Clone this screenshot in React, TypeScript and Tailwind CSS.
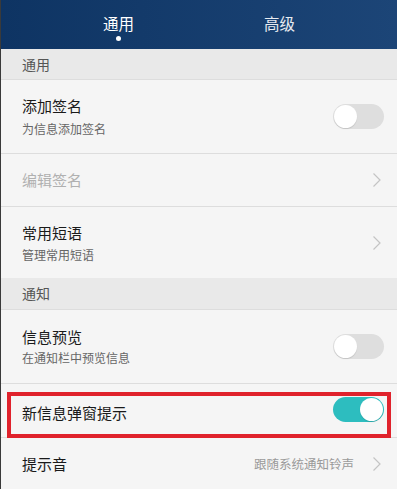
import React from 'react';

const font = { fontFamily: '"Noto Sans CJK SC", "Noto Sans", sans-serif' };

const Toggle: React.FC<{ on?: boolean }> = ({ on }) => (
  <div
    className={`w-[51px] h-[25px] rounded-full flex items-center px-[1px] ${
      on ? 'bg-[#2dbdbf] justify-end' : 'bg-[#dedede] justify-start'
    }`}
  >
    <div className="w-[23px] h-[23px] rounded-full bg-white shadow-[0_1px_1px_rgba(0,0,0,0.12)]" />
  </div>
);

const Chevron: React.FC = () => (
  <svg width="10" height="16" viewBox="0 0 10 16" className="shrink-0">
    <path d="M1.5 1.5 L8 8 L1.5 14.5" fill="none" stroke="#c4c4c4" strokeWidth="1.2" />
  </svg>
);

const Section: React.FC<{ title: string; h: string }> = ({ title, h }) => (
  <div className={`${h} bg-[#e9e9e9] flex items-center pl-[21px] border-b border-[#dddddd] text-[14px] text-[#555555]`}>
    {title}
  </div>
);

export default function App() {
  return (
    <div className="w-[397px] h-[489px] overflow-hidden bg-[#f5f5f5] border-l border-[#3a3a3a]" style={font}>
      {/* HEADER TABS */}
      <div className="h-[49px] bg-gradient-to-r from-[#0e3463] to-[#1c4577] flex justify-center">
        <div className="w-[161px] flex flex-col items-center pt-[12px]">
          <span className="text-[15.5px] leading-[22px] text-white">通用</span>
          <span className="mt-[2px] w-[5px] h-[5px] rounded-full bg-white" />
        </div>
        <div className="w-[161px] flex flex-col items-center pt-[12px]">
          <span className="text-[15.5px] leading-[22px] text-white/90">高级</span>
        </div>
      </div>

      <Section title="通用" h="h-[31px]" />

      <div className="h-[74px] border-b border-[#dddddd] flex items-center pl-[21px] pr-[13px]">
        <div className="flex-1 flex flex-col gap-[5px]">
          <span className="text-[15px] leading-[20px] text-[#1a1a1a]">添加签名</span>
          <span className="text-[12px] leading-[16px] text-[#666666]">为信息添加签名</span>
        </div>
        <Toggle />
      </div>

      <div className="h-[53px] border-b border-[#dddddd] flex items-center pl-[21px] pr-[15px]">
        <span className="flex-1 text-[15px] leading-[20px] text-[#b0b0b0]">编辑签名</span>
        <Chevron />
      </div>

      <div className="h-[71px] flex items-center pl-[21px] pr-[15px]">
        <div className="flex-1 flex flex-col gap-[4px]">
          <span className="text-[15px] leading-[20px] text-[#1a1a1a]">常用短语</span>
          <span className="text-[12px] leading-[16px] text-[#666666]">管理常用短语</span>
        </div>
        <Chevron />
      </div>

      <Section title="通知" h="h-[32px]" />

      <div className="h-[74px] border-b border-[#dddddd] flex items-center pl-[21px] pr-[13px]">
        <div className="flex-1 flex flex-col gap-[3px]">
          <span className="text-[15px] leading-[20px] text-[#1a1a1a]">信息预览</span>
          <span className="text-[12px] leading-[16px] text-[#666666]">在通知栏中预览信息</span>
        </div>
        <Toggle />
      </div>

      <div className="relative h-[54px] border-b border-[#dddddd] flex items-center pl-[21px] pr-[13px] pt-[4px]">
        <span className="flex-1 text-[15px] leading-[20px] text-[#1a1a1a]">新信息弹窗提示</span>
        <div className="-mt-[6px]">
          <Toggle on />
        </div>
        {/* red annotation box */}
        <div className="absolute left-[6px] right-[6px] top-[8px] h-[46px] border-[4px] border-[#e0222c] pointer-events-none" />
      </div>

      <div className="h-[52px] flex items-center pl-[21px] pr-[15px]">
        <span className="flex-1 text-[15px] leading-[20px] text-[#1a1a1a]">提示音</span>
        <span className="text-[12.5px] text-[#9a9a9a] mr-[18px]">跟随系统通知铃声</span>
        <Chevron />
      </div>
    </div>
  );
}
